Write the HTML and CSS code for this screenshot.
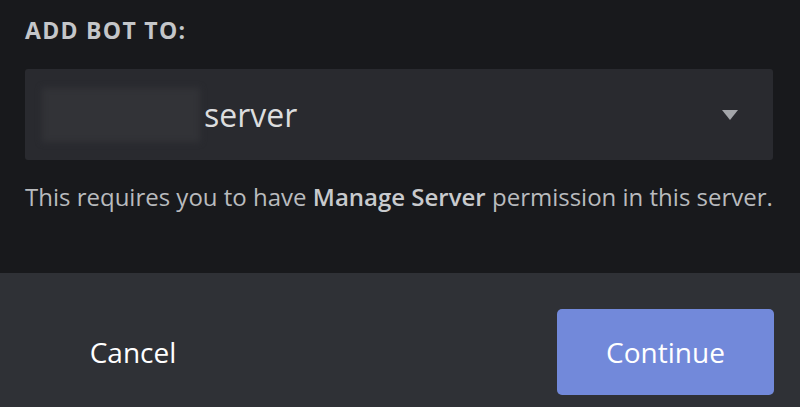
FILE: index.html
```html
<!DOCTYPE html>
<html lang="en-US">
  <head>
    <meta charset="utf-8" />
    <meta name="viewport" content="width=device-width" />
    <title>Add bot</title>
    <link rel="stylesheet" href="styles.css">
  </head>

  <body>
    <div class="modal">
      <div class="modal-body">
        <h2 class="field-label">Add bot to:</h2>
        <div class="select">
          <div class="select-value">
            <span class="guild-blur"></span>
            <span class="guild-name">server</span>
          </div>
          <svg class="select-arrow" width="18" height="12" viewBox="0 0 18 12">
            <path d="M1 1h16l-8 10z" fill="#a3a5a9" />
          </svg>
        </div>
        <p class="hint">
          This requires you to have <strong>Manage Server</strong> permission in this server.
        </p>
      </div>
      <div class="modal-footer">
        <button class="btn btn-link">Cancel</button>
        <button class="btn btn-primary">Continue</button>
      </div>
    </div>
  </body>
</html>
```

FILE: styles.css
```css
body {
  margin: 0;
  background: #18191c;
  font-family: "Open Sans", "Noto Sans", sans-serif;
  color: #dcddde;
}

.modal {
  height: 407px;
  display: flex;
  flex-direction: column;
}

.modal-body {
  height: 273px;
  padding: 0 27px 0 25px;
  box-sizing: border-box;
}

/* section label */
.field-label {
  margin: 0;
  padding-top: 16px;
  font-size: 23px;
  font-weight: 700;
  letter-spacing: 1.3px;
  text-transform: uppercase;
  color: #c4c6c9;
  line-height: 28px;
}

.select {
  margin-top: 25px;
  height: 91px;
  background: #292a2f;
  border-radius: 3px;
  display: flex;
  align-items: center;
  justify-content: space-between;
  padding: 0 34px 0 17px;
}

.select-value {
  display: flex;
  align-items: center;
  gap: 4px;
}

/* guild name is hidden in the screenshot */
.guild-blur {
  width: 158px;
  height: 54px;
  background: #323337;
  filter: blur(3px);
}

.guild-name {
  font-size: 32px;
  color: #dcddde;
}

.select-arrow {
  filter: blur(0.6px);
}

.hint {
  margin: 20px 0 0;
  font-size: 24px;
  color: #b9bbbe;
  white-space: nowrap;
}

.hint strong {
  font-weight: 600;
  color: #c8cacd;
}

.modal-footer {
  flex: 1;
  background: #2f3136;
  display: flex;
  justify-content: space-between;
  align-items: flex-start;
  padding: 36px 26px 0;
}

.btn {
  width: 214px;
  height: 86px;
  border: 0;
  border-radius: 5px;
  font-family: inherit;
  font-size: 28px;
  color: #fff;
  background: none;
}

.btn-primary {
  width: 217px;
  background: #7289da;
}
```
